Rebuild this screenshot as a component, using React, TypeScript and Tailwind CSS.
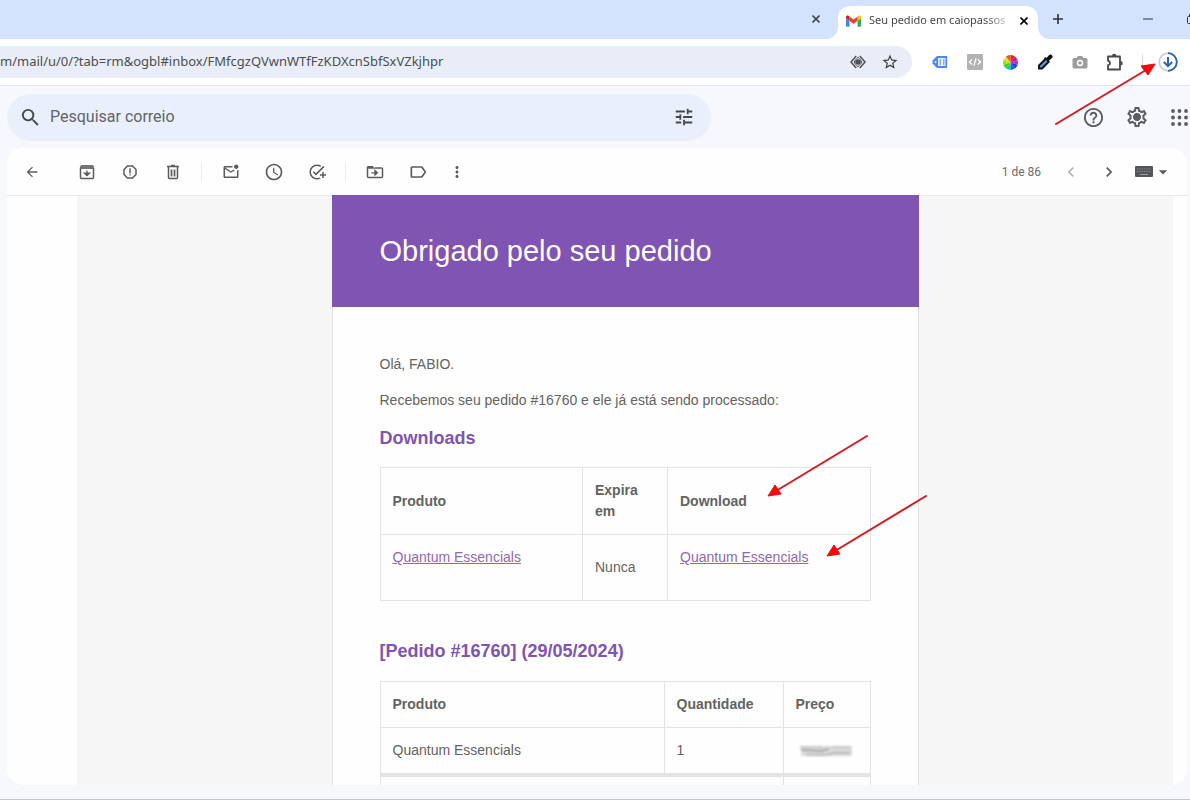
import React from 'react';
import {
  MdAccessTime,
  MdArrowBack,
  MdArrowDropDown,
  MdChevronLeft,
  MdChevronRight,
  MdHelpOutline,
  MdLabelOutline,
  MdMoreVert,
  MdOutlineAddTask,
  MdOutlineMarkEmailUnread,
  MdOutlineReport,
  MdOutlineSettings,
  MdSearch,
  MdStarOutline,
  MdTune,
} from 'react-icons/md';

interface IconButtonProps {
  label: string;
  className?: string;
  children: React.ReactNode;
}

const IconButton: React.FC<IconButtonProps> = ({ label, className = '', children }) => (
  <button type="button" aria-label={label} className={`flex shrink-0 items-center justify-center ${className}`}>
    {children}
  </button>
);

const CloseIcon = () => (
  <svg width="8" height="8" viewBox="0 0 8 8" stroke="currentColor" strokeWidth="1.6">
    <path d="M0.5 0.5L7.5 7.5M7.5 0.5L0.5 7.5" />
  </svg>
);

const GmailIcon = () => (
  <svg width="15" height="12" viewBox="52 42 88 66" className="shrink-0">
    <path fill="#4285f4" d="M58 108h14V74L52 59v43c0 3.3 2.7 6 6 6" />
    <path fill="#34a853" d="M120 108h14c3.3 0 6-2.7 6-6V59l-20 15" />
    <path fill="#fbbc04" d="M120 48v26l20-15v-8c0-7.4-8.5-11.6-14.4-7.2" />
    <path fill="#ea4335" d="M72 74V48l24 18 24-18v26L96 92" />
    <path fill="#c5221f" d="M52 51v8l20 15V48l-5.6-4.2C60.5 39.4 52 43.6 52 51" />
  </svg>
);

const EyeIcon = () => (
  <svg width="16" height="14" viewBox="0 0 16 14" fill="none" stroke="#505154" strokeWidth="1.5">
    <path d="M6.2 1L1 7l5.200 6M9.800 1L15 7l-5.200 6" />
    <path d="M8 2.200C6 4 4.800 5.500 4.200 7 4.800 8.500 6 10 8 11.800 10 10 11.200 8.500 11.800 7 11.200 5.500 10 4 8 2.200z" strokeWidth="1" />
    <circle cx="8" cy="7" r="2.800" fill="#505154" stroke="none" />
  </svg>
);

const TagIcon = () => (
  <svg width="16" height="14" viewBox="0 0 16 14">
    <path d="M5 1h10v12H5L0.5 8.500V5.500z" fill="#4a8af0" />
    <rect x="6" y="3" width="7.500" height="8" fill="#e4eeff" />
    <path d="M7.500 5h1.500M7.500 7h1.500M7.500 9h1.500M11 5h1.500M11 7h1.500M11 9h1.500" stroke="#3a72d8" strokeWidth="1" />
    <circle cx="3.500" cy="7" r="1" fill="#fff" />
  </svg>
);

const CodeIcon = () => (
  <svg width="16" height="16" viewBox="0 0 16 16">
    <rect width="16" height="16" rx="1" fill="#b3b3b6" />
    <path d="M5 5.500L2.500 8 5 10.500M11 5.500L13.500 8 11 10.500M9 4.500l-2 7" fill="none" stroke="#fff" strokeWidth="1.3" />
  </svg>
);

const WHEEL = ['#e0202a', '#c81098', '#b030e0', '#2838e0', '#2060d8', '#20c8a0', '#30d828', '#a0e020', '#e8d830', '#e85820'];

const ColorWheelIcon = () => (
  <svg width="15" height="15" viewBox="-7 -7 14 14">
    {WHEEL.map((color, i) => {
      const from = (i * 36 * Math.PI) / 180;
      const to = ((i + 1) * 36 * Math.PI) / 180;
      return (
        <path
          key={color}
          fill={color}
          d={`M0 0L${7 * Math.sin(from)} ${-7 * Math.cos(from)}A7 7 0 0 1 ${7 * Math.sin(to)} ${-7 * Math.cos(to)}Z`}
        />
      );
    })}
  </svg>
);

const DropperIcon = () => (
  <svg width="16" height="16" viewBox="0 0 16 16">
    <path d="M8.500 5L2 11.500V14.500h3L11.500 8" fill="#5f93e0" stroke="#111" strokeWidth="1.900" />
    <path d="M7 4.200l1.200-1.200 1.200 1L12 1.200a2 2 0 0 1 2.900 2.900L12 6.700l1 1.200-1.200 1.200z" fill="#111" />
  </svg>
);

const CameraIcon = () => (
  <svg width="16" height="14" viewBox="0 0 16 14">
    <path d="M2 3h2.500L6 1h4l1.500 2H14a1.500 1.500 0 0 1 1.500 1.500V12a1.500 1.500 0 0 1-1.500 1.500H2A1.500 1.500 0 0 1 .5 12V4.500A1.500 1.500 0 0 1 2 3z" fill="#9d9d9d" />
    <circle cx="8" cy="8" r="3.200" fill="#fff" />
    <circle cx="8" cy="8" r="1.800" fill="#9d9d9d" />
  </svg>
);

const PuzzleIcon = () => (
  <svg width="18" height="18" viewBox="0 0 18 18" fill="none" stroke="#47484b" strokeWidth="1.800">
    <path d="M2 3.500h12v13H2v-4.300c2.600-.4 2.600-4 0-4.400z" strokeLinejoin="round" />
    <path d="M6 3a2.200 2.200 0 0 1 4.400 0zM14.500 8a2.200 2.200 0 0 1 0 4.400z" fill="#47484b" stroke="none" />
  </svg>
);

const DownloadProgressIcon = () => (
  <svg width="20" height="20" viewBox="0 0 20 20" fill="none">
    <circle cx="10" cy="10" r="8.800" stroke="#ccd0d6" strokeWidth="1.800" />
    <path d="M10 1.200a8.800 8.800 0 1 1 0 17.600" stroke="#2b62ab" strokeWidth="1.800" />
    <path d="M10 5v9M5.800 10l4.200 4.200 4.200-4.200" stroke="#2b62ab" strokeWidth="2" />
  </svg>
);

const GearIcon = () => (
  <svg width="24" height="24" viewBox="0 0 24 24" fill="currentColor">
    <MdOutlineSettings size={24} />
    <circle cx="12" cy="12" r="3.600" />
  </svg>
);

const AppsIcon = () => (
  <svg width="17" height="17" viewBox="0 0 17 17" fill="#5a5d61">
    {[2, 8.5, 15].map((y) => [2, 8.5, 15].map((x) => <circle key={`${x}-${y}`} cx={x} cy={y} r="1.900" />))}
  </svg>
);

const ArchiveIcon = () => (
  <svg width="16" height="16" viewBox="0 0 16 16" fill="none" stroke="currentColor" strokeWidth="1.500">
    <path d="M1.500 4v9.500a1 1 0 0 0 1 1h11a1 1 0 0 0 1-1V4" />
    <path d="M2.500 1h11L15 2.500V5H1V2.500z" fill="currentColor" fillOpacity="0.85" stroke="none" />
    <path d="M8 6.500v5M5.500 9.200L8 11.700l2.500-2.500z" fill="currentColor" strokeWidth="1.300" />
  </svg>
);

const TrashIcon = () => (
  <svg width="14" height="16" viewBox="0 0 14 16" fill="none" stroke="currentColor" strokeWidth="1.500">
    <path d="M1 2.500h12M5 1.500h4" />
    <path d="M2.500 3v10.500a1 1 0 0 0 1 1h7a1 1 0 0 0 1-1V3" />
    <path d="M5.500 5.500v7M8.500 5.500v7" strokeWidth="1.700" />
  </svg>
);

const MoveToIcon = () => (
  <svg width="18" height="14" viewBox="0 0 18 14" fill="none" stroke="currentColor" strokeWidth="1.500">
    <path d="M1.500 2v9.500a1 1 0 0 0 1 1h13a1 1 0 0 0 1-1V4a1 1 0 0 0-1-1H8.500" />
    <path d="M1 3.800V2a1 1 0 0 1 1-1h4.800l2 2.800z" fill="currentColor" stroke="none" />
    <path d="M5.500 7.800h5.500M9 5.500l2.400 2.300L9 10.100z" fill="currentColor" strokeWidth="1.300" />
  </svg>
);

const KeyboardIcon = () => (
  <svg width="18" height="11" viewBox="0 0 18 11">
    <rect width="18" height="11" rx="1" fill="#555659" />
    <path d="M2 3h14M2 5.500h14" stroke="#85868a" strokeDasharray="1.300 1" />
    <path d="M5 8.500h8" stroke="#a0a1a4" />
  </svg>
);

// Points down and to the left
const RedArrow: React.FC<{ className: string }> = ({ className }) => (
  <svg width="104" height="64" viewBox="0 0 104 64" className={`pointer-events-none absolute ${className}`}>
    <path d="M101 2L10 57" stroke="#d8181f" strokeWidth="2" strokeLinecap="round" />
    <path d="M2 62l7-11 6 9z" fill="#f80808" stroke="#f80808" strokeLinejoin="round" />
  </svg>
);

const BrowserChrome = () => (
  <div className="relative shrink-0 font-['Noto_Sans','Open_Sans',sans-serif]">
    <div className="flex h-[39px] items-end justify-end overflow-hidden bg-[#d3e3fd] text-[#303236]">
      <IconButton label="Fechar guia" className="mr-3 h-10 w-5 text-[#45484d]">
        <CloseIcon />
      </IconButton>
      <div className="relative flex h-[33px] w-[200px] shrink-0 items-center rounded-t-xl bg-white pr-1 pb-1 pl-2">
        <div className="absolute bottom-0 -left-3 size-3 bg-white">
          <div className="size-3 rounded-br-xl bg-[#d3e3fd]" />
        </div>
        <div className="absolute -right-3 bottom-0 size-3 bg-white">
          <div className="size-3 rounded-bl-xl bg-[#d3e3fd]" />
        </div>
        <GmailIcon />
        <span className="ml-2 flex-1 text-[11px] whitespace-nowrap text-[#45474b] [mask-image:linear-gradient(to_right,black_80%,transparent)]">
          Seu pedido em caiopassos
        </span>
        <IconButton label="Fechar guia atual" className="size-5 text-black">
          <CloseIcon />
        </IconButton>
      </div>
      <IconButton label="Nova guia" className="ml-3 h-10 w-4">
        <svg width="10" height="10" viewBox="0 0 10 10" stroke="currentColor" strokeWidth="1.6">
          <path d="M5 0v10M0 5h10" />
        </svg>
      </IconButton>
      <IconButton label="Minimizar" className="ml-[74px] h-10 w-4">
        <svg width="10" height="2" viewBox="0 0 10 2">
          <path d="M0 1h10" stroke="currentColor" />
        </svg>
      </IconButton>
      <IconButton label="Restaurar" className="-mr-2 ml-[30px] h-10 w-3">
        <svg width="10" height="10" viewBox="0 0 10 10" fill="none" stroke="currentColor">
          <rect x="0.5" y="2.500" width="7" height="7" rx="1" />
          <path d="M2.500 2.500v-2h7v7h-2" />
        </svg>
      </IconButton>
    </div>

    <div className="flex h-[47px] items-center border-b border-[#e4e5e8] bg-white">
      <div className="flex h-8 min-w-0 flex-1 items-center rounded-r-full bg-[#e9edf7] pr-[10px]">
        <input
          aria-label="Endereço"
          readOnly
          value="m/mail/u/0/?tab=rm&ogbl#inbox/FMfcgzQVwnWTfFzKDXcnSbfSxVZkjhpr"
          className="min-w-0 flex-1 bg-transparent text-[13px] text-[#4b4d52] outline-none"
        />
        <IconButton label="Visualizar" className="w-6">
          <EyeIcon />
        </IconButton>
        <IconButton label="Favoritar" className="ml-2 w-6 text-lg text-[#3c3e42]">
          <MdStarOutline />
        </IconButton>
      </div>
      <div className="mr-3 ml-4 flex items-center gap-[11px]">
        <IconButton label="Extensão de etiquetas" className="w-6"><TagIcon /></IconButton>
        <IconButton label="Extensão de código" className="w-6"><CodeIcon /></IconButton>
        <IconButton label="Roda de cores" className="w-6"><ColorWheelIcon /></IconButton>
        <IconButton label="Conta-gotas" className="w-6"><DropperIcon /></IconButton>
        <IconButton label="Captura de tela" className="w-6"><CameraIcon /></IconButton>
        <IconButton label="Extensões" className="w-6"><PuzzleIcon /></IconButton>
        <div className="ml-1 h-4 w-px bg-[#d3e0f5]" />
        <IconButton label="Downloads" className="ml-1 w-5"><DownloadProgressIcon /></IconButton>
      </div>
    </div>

    <svg width="104" height="64" viewBox="0 0 104 64" className="pointer-events-none absolute top-[62px] right-8 z-10">
      <path d="M2 62L92 8" stroke="#d8181f" strokeWidth="2" strokeLinecap="round" />
      <path d="M101 2l-7 11-7-9z" fill="#f80808" stroke="#f80808" strokeLinejoin="round" />
    </svg>
  </div>
);

const SearchHeader = () => (
  <header className="flex h-[62px] shrink-0 items-center pl-[7px]">
    <div className="flex h-[47px] max-w-[704px] flex-1 items-center rounded-full bg-[#e9f0fb] pr-4 pl-3">
      <MdSearch className="shrink-0 text-[23px] text-[#45484c]" />
      <input
        aria-label="Pesquisar correio"
        placeholder="Pesquisar correio"
        className="ml-2 min-w-0 flex-1 bg-transparent text-base text-[#60646a] outline-none placeholder:text-[#60646a]"
      />
      <IconButton label="Opções de pesquisa" className="text-[22px] text-[#45484c]">
        <MdTune />
      </IconButton>
    </div>
    <div className="ml-auto flex items-center gap-5 text-[23px] text-[#5a5d61]">
      <IconButton label="Suporte"><MdHelpOutline /></IconButton>
      <IconButton label="Configurações"><GearIcon /></IconButton>
      <IconButton label="Google Apps" className="w-[21px]"><AppsIcon /></IconButton>
    </div>
  </header>
);

const Divider = () => <div className="mx-[7px] h-5 w-px bg-[#ececec]" />;

const MailToolbar = () => (
  <div className="flex h-[47px] shrink-0 items-center pr-[14px] pl-[3px] text-lg text-[#5a5b5e]">
    <IconButton label="Voltar" className="w-[43px] text-base"><MdArrowBack /></IconButton>
    <IconButton label="Arquivar" className="ml-3 w-[43px]"><ArchiveIcon /></IconButton>
    <IconButton label="Denunciar spam" className="w-[43px]"><MdOutlineReport /></IconButton>
    <IconButton label="Excluir" className="w-[43px]"><TrashIcon /></IconButton>
    <Divider />
    <IconButton label="Marcar como não lida" className="w-[43px]"><MdOutlineMarkEmailUnread /></IconButton>
    <IconButton label="Adiar" className="w-[43px] text-xl"><MdAccessTime /></IconButton>
    <IconButton label="Adicionar às tarefas" className="w-[43px]"><MdOutlineAddTask /></IconButton>
    <Divider />
    <IconButton label="Mover para" className="w-[43px]"><MoveToIcon /></IconButton>
    <IconButton label="Marcadores" className="w-[43px] text-xl"><MdLabelOutline /></IconButton>
    <IconButton label="Mais" className="w-9"><MdMoreVert /></IconButton>
    <span className="ml-auto text-xs text-[#6b6c70]">1 de 86</span>
    <IconButton label="Mais recente" className="ml-5 text-xl text-[#b4b4b6]"><MdChevronLeft /></IconButton>
    <IconButton label="Mais antiga" className="ml-[18px] text-xl"><MdChevronRight /></IconButton>
    <IconButton label="Ferramentas de entrada" className="ml-4">
      <KeyboardIcon />
      <MdArrowDropDown className="text-xl" />
    </IconButton>
  </div>
);

const CELL = 'border border-[#e3e3e3] px-3 pt-3 text-left align-middle';

const ProductLink = () => (
  <a href="#download" className="text-[#8f68b3] underline">
    Quantum Essencials
  </a>
);

const EmailCard = () => (
  <article className="relative mx-auto w-full max-w-[587px] font-['Liberation_Sans',Arial,sans-serif] text-sm leading-[21px] text-[#636363]">
    <div className="bg-[#7f54b3] px-12 py-9">
      <h1 className="text-[29px] leading-10 text-white">Obrigado pelo seu pedido</h1>
    </div>
    <div className="border-x border-[#e0e0e0] bg-[#fefefe] px-[47px] pt-[47px] pb-12">
      <p>Olá, FABIO.</p>
      <p className="mt-[15px]">Recebemos seu pedido #16760 e ele já está sendo processado:</p>
      <h2 className="mt-[15px] text-lg leading-6 font-bold text-[#7f54b3]">Downloads</h2>
      <table className="mt-[17px] w-full table-fixed border-collapse">
        <thead>
          <tr>
            <th className={`${CELL} pb-3`}>Produto</th>
            <th className={`${CELL} w-[85px] pb-3`}>Expira em</th>
            <th className={`${CELL} pb-3`}>Download</th>
          </tr>
        </thead>
        <tbody>
          <tr>
            <td className={`${CELL} pb-8`}><ProductLink /></td>
            <td className={`${CELL} pb-3`}>Nunca</td>
            <td className={`${CELL} pb-8`}><ProductLink /></td>
          </tr>
        </tbody>
      </table>

      <h2 className="mt-[38px] text-lg leading-6 font-bold text-[#7f54b3]">[Pedido #16760] (29/05/2024)</h2>
      <table className="mt-[18px] w-full table-fixed border-collapse">
        <thead>
          <tr>
            <th className={`${CELL} pb-3`}>Produto</th>
            <th className={`${CELL} w-[119px] pb-3`}>Quantidade</th>
            <th className={`${CELL} w-[87px] pb-3`}>Preço</th>
          </tr>
        </thead>
        <tbody>
          <tr>
            <td className={`${CELL} pb-3`}>Quantum Essencials</td>
            <td className={`${CELL} pb-3`}>1</td>
            <td className={`${CELL} pb-3`}>
              <svg width="60" height="14" viewBox="0 0 60 14" className="blur-[1px]">
                <rect x="5" y="2" width="51" height="10" fill="#dadada" />
                <path d="M4 3h22M36 3h18" stroke="#c0c0c0" strokeWidth="1.500" />
                <path d="M5 6l20 1 8-2" stroke="#9a9a9a" strokeWidth="1.300" fill="none" />
                <path d="M10 11l20 0 8-2h16" stroke="#b0b0b0" strokeWidth="1.500" fill="none" />
              </svg>
            </td>
          </tr>
        </tbody>
        <tfoot>
          <tr>
            <td colSpan={2} className="h-11 border border-t-4 border-[#e3e3e3]" />
            <td className="border border-t-4 border-[#e3e3e3]" />
          </tr>
        </tfoot>
      </table>
    </div>
    <RedArrow className="top-[239px] left-[434px]" />
    <RedArrow className="top-[299px] left-[493px]" />
  </article>
);

export default function App() {
  return (
    <div className="flex h-screen flex-col overflow-hidden border-b border-[#c4c6ca] bg-[#f6f8fc] font-[Roboto,sans-serif]">
      <BrowserChrome />
      <SearchHeader />
      <main className="mr-[3px] mb-[14px] ml-[7px] flex min-h-0 flex-1 flex-col overflow-hidden rounded-2xl bg-[#fefefe]">
        <MailToolbar />
        <div className="min-h-0 flex-1 overflow-hidden shadow-[inset_0_1px_0_#e9e9ea]">
          <div className="mr-[14px] ml-[70px] h-full overflow-hidden bg-[#f6f6f6] shadow-[inset_0_1px_0_#e9e9ea]">
            <EmailCard />
          </div>
        </div>
      </main>
    </div>
  );
}
